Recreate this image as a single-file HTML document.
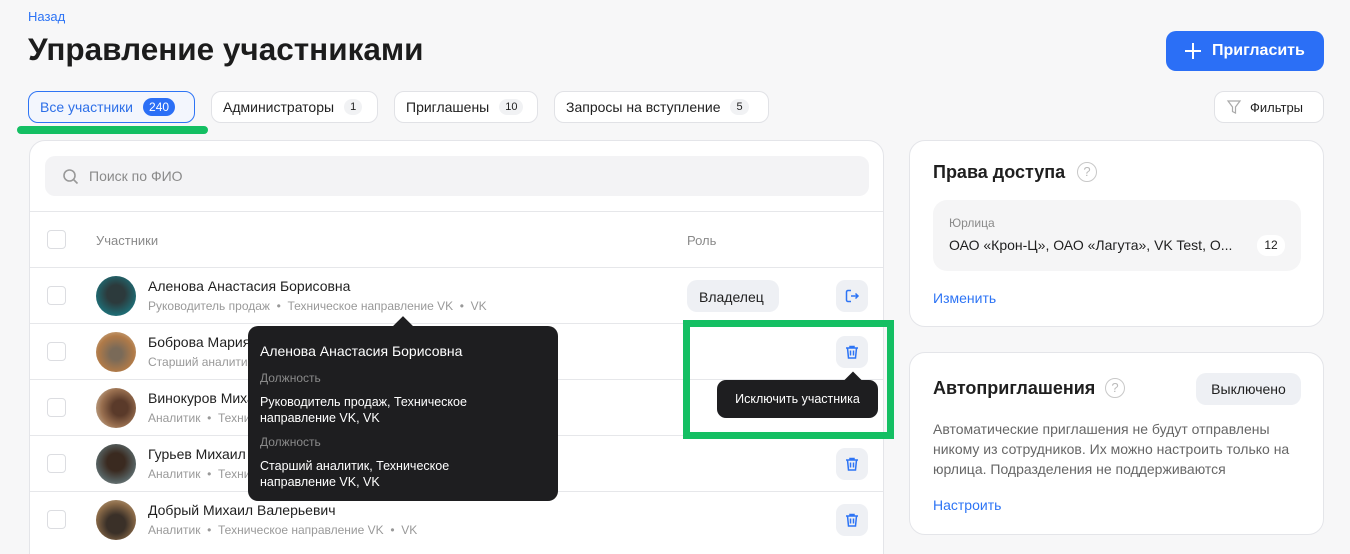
<!DOCTYPE html>
<html><head><meta charset="utf-8"><style>
*{box-sizing:border-box;margin:0;padding:0}
html,body{width:1350px;height:554px;overflow:hidden}
body{background:#f7f7f8;font-family:"Liberation Sans",sans-serif;color:#1f1f1f;position:relative}
.abs{position:absolute}
.tab{position:absolute;top:91px;height:32px;border:1px solid #e1e2e6;border-radius:10px;background:#fff;font-size:14px;display:flex;align-items:center;padding:0 11px;gap:10px}
.cnt{font-size:11px;background:#f1f2f4;border-radius:9px;padding:2px 6px}
.card{position:absolute;background:#fff;border:1px solid #e4e5e9;border-radius:16px}
.row{position:absolute;left:0;width:854px;height:56px;border-top:1px solid #e6e7ea}
.cb{position:absolute;left:17px;top:18px;width:19px;height:19px;border:1.5px solid #dcdde1;border-radius:4px}
.av{position:absolute;left:66px;top:8px;width:40px;height:40px;border-radius:50%}
.nm{position:absolute;left:118px;top:10px;font-size:14px}
.sub{position:absolute;left:118px;top:31px;font-size:12px;color:#999}
.ib{position:absolute;left:806px;top:12px;width:32px;height:32px;border-radius:9px;background:#eef0f4;display:flex;align-items:center;justify-content:center}
</style></head><body>
<div class="abs" style="left:28px;top:9px;font-size:13px;color:#2d74f5">Назад</div>
<div class="abs" style="left:28px;top:31px;font-size:31.5px;font-weight:bold;color:#1c1c1c">Управление участниками</div>
<div class="abs" style="left:1166px;top:31px;width:158px;height:40px;background:#2b6ff6;border-radius:10px;color:#fff;font-size:16px;font-weight:bold;display:flex;align-items:center;padding-left:18px;gap:10px"><svg width="18" height="18"><path d="M9 1v16M1 9h16" stroke="#fff" stroke-width="2"/></svg>Пригласить</div>
<div class="tab" style="left:28px;width:167px;border-color:#2d74f5;background:#f3f6fd;color:#2d6fe8">Все участники <span class="cnt" style="background:#2b6ff6;color:#fff;font-size:12px">240</span></div>
<div class="abs" style="left:17px;top:126px;width:191px;height:8px;background:#14bf63;border-radius:4px"></div>
<div class="tab" style="left:211px;width:167px">Администраторы <span class="cnt">1</span></div>
<div class="tab" style="left:394px;width:144px">Приглашены <span class="cnt">10</span></div>
<div class="tab" style="left:554px;width:215px">Запросы на вступление <span class="cnt">5</span></div>
<div class="tab" style="left:1214px;width:110px;font-size:13px;gap:8px"><svg width="16" height="16"><path d="M2 2h12l-4.5 6v6l-3-1.5V8z" fill="none" stroke="#aaa" stroke-width="1.2"/></svg>Фильтры</div>

<div class="card" style="left:29px;top:140px;width:855px;height:430px;overflow:hidden">
 <div class="abs" style="left:15px;top:15px;width:824px;height:40px;background:#f3f3f5;border-radius:10px;font-size:14px;color:#8a8a8a;padding:12px 0 0 44px">Поиск по ФИО
  <svg class="abs" style="left:17px;top:12px" width="18" height="18"><circle cx="7.5" cy="7.5" r="5.5" fill="none" stroke="#999" stroke-width="1.6"/><path d="M11.5 11.5l4 4" stroke="#999" stroke-width="1.6"/></svg></div>
 <div class="row" style="top:70px"><div class="cb"></div><div class="abs" style="left:66px;top:21px;font-size:13px;color:#8a8a8a">Участники</div><div class="abs" style="left:657px;top:21px;font-size:13px;color:#8a8a8a">Роль</div></div>
 <div class="row" style="top:126px"><div class="cb"></div><div class="av" style="background:radial-gradient(circle at 50% 45%,#2c3a3c 30%,#1f6b73 70%,#6a8a8c)"></div><div class="nm">Аленова Анастасия Борисовна</div><div class="sub">Руководитель продаж &nbsp;•&nbsp; Техническое направление VK &nbsp;•&nbsp; VK</div>
  <div class="abs" style="left:657px;top:12px;height:32px;width:92px;background:#eef0f4;border-radius:10px;font-size:14px;padding:9px 0 0 12px">Владелец</div>
  <div class="ib"><svg width="16" height="16"><path d="M7 2.5H4a1.5 1.5 0 0 0-1.5 1.5v8A1.5 1.5 0 0 0 4 13.5h3M7 8h7M11.5 5.5L14 8l-2.5 2.5" fill="none" stroke="#2d74f5" stroke-width="1.5"/></svg></div></div>
 <div class="row" style="top:182px"><div class="cb"></div><div class="av" style="background:radial-gradient(circle at 50% 55%,#7a6a58 20%,#b07a48 60%,#d9c1a0)"></div><div class="nm">Боброва Мария</div><div class="sub">Старший аналитик</div><div class="ib tr"></div></div>
 <div class="row" style="top:238px"><div class="cb"></div><div class="av" style="background:radial-gradient(circle at 60% 50%,#5a3a2a 25%,#9a7050 60%,#d8c8b0)"></div><div class="nm">Винокуров Михаил</div><div class="sub">Аналитик &nbsp;•&nbsp; Техническое</div></div>
 <div class="row" style="top:294px"><div class="cb"></div><div class="av" style="background:radial-gradient(circle at 50% 45%,#3a2a20 30%,#556060 65%,#9aa0a0)"></div><div class="nm">Гурьев Михаил</div><div class="sub">Аналитик &nbsp;•&nbsp; Техническое</div><div class="ib tr"></div></div>
 <div class="row" style="top:350px"><div class="cb"></div><div class="av" style="background:radial-gradient(circle at 50% 60%,#3a3028 30%,#8a6a48 65%,#c8b090)"></div><div class="nm">Добрый Михаил Валерьевич</div><div class="sub">Аналитик &nbsp;•&nbsp; Техническое направление VK &nbsp;•&nbsp; VK</div><div class="ib tr"></div></div>
</div>

<div class="card" style="left:909px;top:140px;width:415px;height:187px">
 <div class="abs" style="left:23px;top:21px;font-size:18px;font-weight:bold">Права доступа</div>
 <div class="abs" style="left:167px;top:21px;width:20px;height:20px;border:1.5px solid #c8c8c8;border-radius:50%;color:#bbb;font-size:13px;text-align:center;line-height:17px">?</div>
 <div class="abs" style="left:23px;top:59px;width:368px;height:71px;background:#f5f5f6;border-radius:14px">
  <div class="abs" style="left:16px;top:16px;font-size:12px;color:#8a8a8a">Юрлица</div>
  <div class="abs" style="left:16px;top:37px;font-size:14px">ОАО «Крон-Ц», ОАО «Лагута», VK Test, О...</div>
  <div class="abs" style="left:324px;top:35px;width:28px;height:21px;background:#fff;border-radius:10px;font-size:12px;text-align:center;line-height:21px">12</div></div>
 <div class="abs" style="left:23px;top:149px;font-size:14px;color:#2d74f5">Изменить</div>
</div>
<div class="card" style="left:909px;top:352px;width:415px;height:183px">
 <div class="abs" style="left:23px;top:25px;font-size:18px;font-weight:bold">Автоприглашения</div>
 <div class="abs" style="left:195px;top:25px;width:20px;height:20px;border:1.5px solid #c8c8c8;border-radius:50%;color:#bbb;font-size:13px;text-align:center;line-height:17px">?</div>
 <div class="abs" style="left:286px;top:20px;width:105px;height:32px;background:#eef0f4;border-radius:10px;font-size:14px;text-align:center;line-height:32px">Выключено</div>
 <div class="abs" style="left:23px;top:66px;width:370px;font-size:14px;line-height:20px;color:#666">Автоматические приглашения не будут отправлены никому из сотрудников. Их можно настроить только на юрлица. Подразделения не поддерживаются</div>
 <div class="abs" style="left:23px;top:144px;font-size:14px;color:#2d74f5">Настроить</div>
</div>

<div class="abs" style="left:683px;top:320px;width:211px;height:119px;border:7px solid #14bf63"></div>

<div class="abs" style="left:248px;top:326px;width:310px;height:175px;background:#1e1e20;border-radius:10px;color:#fff">
 <div class="abs" style="left:148px;top:-7px;width:14px;height:14px;background:#1e1e20;transform:rotate(45deg)"></div>
 <div class="abs" style="left:12px;top:17px;font-size:14px">Аленова Анастасия Борисовна</div>
 <div class="abs" style="left:12px;top:45px;font-size:12px;color:#8a8a8a">Должность</div>
 <div class="abs" style="left:12px;top:68px;font-size:12.5px;line-height:16px;width:240px">Руководитель продаж, Техническое направление VK, VK</div>
 <div class="abs" style="left:12px;top:109px;font-size:12px;color:#8a8a8a">Должность</div>
 <div class="abs" style="left:12px;top:132px;font-size:12.5px;line-height:16px;width:220px">Старший аналитик, Техническое направление VK, VK</div>
</div>
<div class="abs" style="left:717px;top:380px;width:161px;height:38px;background:#1e1e20;border-radius:9px;color:#fff;font-size:12.5px;line-height:38px;text-align:center">
 <div class="abs" style="left:130px;top:-6px;width:12px;height:12px;background:#1e1e20;transform:rotate(45deg)"></div>Исключить участника</div>
<script>
document.querySelectorAll('.tr').forEach(e=>e.innerHTML='<svg width="16" height="16"><path d="M2 4h12M6 4V2.5h4V4M3.5 4l1 10h7l1-10M6.5 6.5v5M9.5 6.5v5" fill="none" stroke="#2d74f5" stroke-width="1.5"/></svg>');
</script>
</body></html>
